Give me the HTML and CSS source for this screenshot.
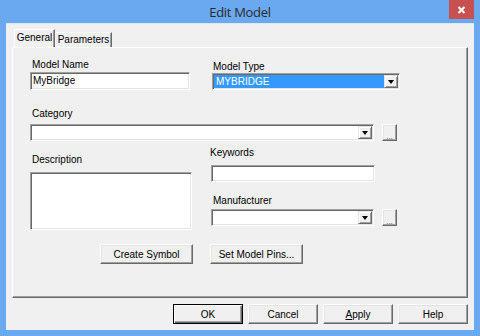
FILE: index.html
```html
<!DOCTYPE html>
<html lang="en">

<head>
    <meta charset="UTF-8">
    <title>Edit Model</title>
    <link rel="stylesheet" href="styles.css">
</head>

<body>
    <div class="window">
        <!-- タイトルバー -->
        <div class="titlebar">
            <span class="title">Edit Model</span>
            <span class="close">
                <svg width="9" height="8" viewBox="0 0 9 8">
                    <path d="M1.5 1 L7.5 7 M7.5 1 L1.5 7" stroke="#fff" stroke-width="2" />
                </svg>
            </span>
        </div>

        <div class="client">
            <!-- タブ -->
            <div class="tabs">
                <div class="tab active">General</div>
                <div class="tab">Parameters</div>
            </div>

            <div class="pane">
                <div class="row row-top">
                    <div class="col col-name">
                        <div class="label">Model Name</div>
                        <div class="field input-name">MyBridge</div>
                    </div>
                    <div class="col col-type">
                        <div class="label label-type">Model Type</div>
                        <div class="field combo combo-type">
                            <span class="value selected">MYBRIDGE</span>
                            <span class="arrow"></span>
                        </div>
                    </div>
                </div>

                <div class="row-category">
                    <div class="label">Category</div>
                    <div class="combo-line">
                        <div class="field combo combo-category">
                            <span class="value"></span>
                            <span class="arrow"></span>
                        </div>
                        <button class="btn dots">...</button>
                    </div>
                </div>

                <div class="row row-lower">
                    <div class="col col-desc">
                        <div class="label label-desc">Description</div>
                        <div class="field textarea"></div>
                    </div>
                    <div class="col col-side">
                        <div class="label label-keywords">Keywords</div>
                        <div class="field input-keywords"></div>
                        <div class="label label-manufacturer">Manufacturer</div>
                        <div class="combo-line combo-line-manufacturer">
                            <div class="field combo combo-manufacturer">
                                <span class="value"></span>
                                <span class="arrow"></span>
                            </div>
                            <button class="btn dots">...</button>
                        </div>
                    </div>
                </div>

                <div class="row row-buttons">
                    <button class="btn wide create">Create Symbol</button>
                    <button class="btn wide pins">Set Model Pins...</button>
                </div>
            </div>

            <!-- 下のボタン -->
            <div class="actions">
                <button class="btn action default">OK</button>
                <button class="btn action">Cancel</button>
                <button class="btn action"><u>A</u>pply</button>
                <button class="btn action">Help</button>
            </div>
        </div>
    </div>
</body>

</html>
```

FILE: styles.css
```css
body {
    margin: 0;
    font-family: "Liberation Sans", Arial, sans-serif;
    font-size: 10px;
    color: #000;
}

.window {
    width: 480px;
    height: 336px;
    background-color: #6aa9f0;
    display: flex;
    flex-direction: column;
}

/* タイトルバー */
.titlebar {
    position: relative;
    height: 23px;
    display: flex;
    align-items: center;
    justify-content: center;
}

.title {
    font-family: "Open Sans", "Noto Sans", sans-serif;
    font-size: 13px;
    letter-spacing: -0.3px;
    color: #2b2b2b;
    margin-top: 1px;
}

.close {
    position: absolute;
    top: 0;
    right: 6px;
    width: 25px;
    height: 19px;
    background-color: #c75050;
    display: flex;
    align-items: center;
    justify-content: center;
}

.client {
    flex: 1;
    margin: 0 6px 6px;
    padding: 6px 6px 0;
    background-color: #f0f0f0;
    box-shadow: inset 0 1px 0 #dde8f5;
}

/* タブ */
.tabs {
    display: flex;
    align-items: flex-end;
    height: 18px;
    padding-left: 2px;
}

.tab {
    box-sizing: border-box;
    height: 15px;
    line-height: 14px;
    text-align: center;
    width: 57px;
    border-top: 1px solid #fff;
    border-left: 1px solid #fff;
    border-right: 1px solid #696969;
    box-shadow: inset -1px 0 0 #a0a0a0;
}

.tab.active {
    width: 41px;
    height: 18px;
    line-height: 15px;
}

.pane {
    box-sizing: border-box;
    width: 456px;
    height: 251px;
    border: 1px solid;
    border-color: #fff #696969 #696969 #fff;
    box-shadow: inset -1px -1px 0 #a0a0a0;
    padding: 11px 0 0 17px;
}

.row {
    display: flex;
}

.label {
    height: 12px;
    line-height: 12px;
    padding-left: 2px;
}

/* 入力欄 */
.field {
    box-sizing: border-box;
    background-color: #fff;
    border: 1px solid;
    border-color: #a0a0a0 #fff #fff #a0a0a0;
    box-shadow: inset 1px 1px 0 #696969, inset -1px -1px 0 #e3e3e3;
}

.input-name {
    width: 160px;
    height: 18px;
    margin-top: 1px;
    padding-left: 2px;
    line-height: 16px;
}

.col-type {
    margin-left: 22px;
}

.label-type {
    margin-top: 2px;
    padding-left: 1px;
}

.combo {
    display: flex;
    height: 17px;
    padding: 1px;
}

.combo .value {
    flex: 1;
    line-height: 13px;
    padding-left: 2px;
}

.combo .value.selected {
    background-color: #3399ff;
    color: #fff;
}

.combo .arrow {
    box-sizing: border-box;
    width: 14px;
    background-color: #f0f0f0;
    border: 1px solid;
    border-color: #e3e3e3 #696969 #696969 #e3e3e3;
    box-shadow: inset 1px 1px 0 #fff, inset -1px -1px 0 #a0a0a0;
    display: flex;
    align-items: center;
    justify-content: center;
}

.combo .arrow::after {
    content: "";
    border-top: 4px solid #000;
    border-left: 3.5px solid transparent;
    border-right: 3.5px solid transparent;
}

.combo-type {
    width: 188px;
}

.row-category {
    margin-top: 18px;
}

.combo-line {
    display: flex;
    gap: 8px;
    margin-top: 4px;
}

.combo-category {
    width: 344px;
}

.row-lower {
    margin-top: 6px;
}

.col-desc {
    width: 162px;
}

.label-desc {
    margin-top: 7px;
}

.textarea {
    height: 58px;
    margin-top: 6px;
}

.col-side {
    margin-left: 19px;
}

.label-keywords {
    margin-left: -3px;
}

.input-keywords {
    width: 164px;
    height: 17px;
    margin-top: 6px;
}

.label-manufacturer {
    margin-top: 13px;
}

.combo-line-manufacturer {
    margin-top: 2px;
}

.combo-manufacturer {
    width: 163px;
}

/* ボタン */
.btn {
    box-sizing: border-box;
    height: 20px;
    padding: 0;
    margin: 0;
    background-color: #f0f0f0;
    border: 1px solid;
    border-color: #fff #696969 #696969 #fff;
    box-shadow: inset -1px -1px 0 #a0a0a0, inset 1px 1px 0 #e3e3e3;
    font: inherit;
    color: #000;
}

.dots {
    width: 15px;
    height: 17px;
    font-size: 8px;
    line-height: 17px;
    color: #555;
    padding-top: 3px;
}

.row-buttons {
    margin-top: 14px;
}

.wide {
    width: 93px;
}

.create {
    margin-left: 70px;
}

.pins {
    margin-left: 17px;
}

.actions {
    display: flex;
    justify-content: flex-end;
    gap: 5px;
    margin-top: 6px;
}

.action {
    width: 70px;
}

.action.default {
    border-color: #000;
    box-shadow: inset 1px 1px 0 #fff, inset -1px -1px 0 #696969, inset -2px -2px 0 #a0a0a0;
}
```
